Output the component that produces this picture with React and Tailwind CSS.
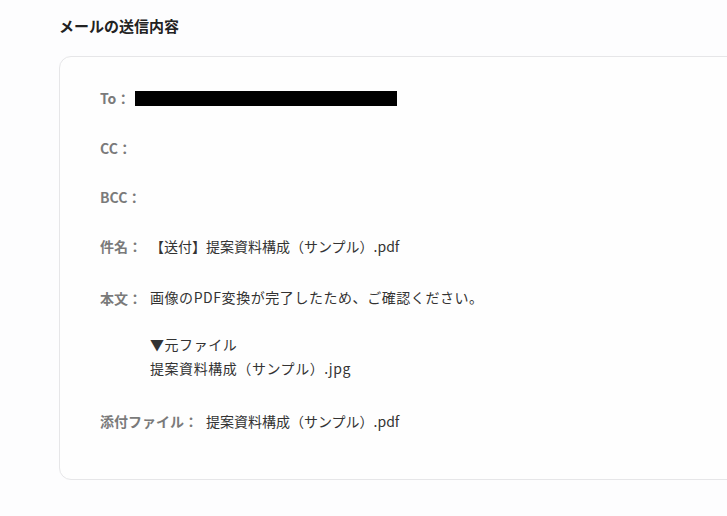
import React from "react";

const font = { fontFamily: '"Noto Sans CJK JP", "Noto Sans", sans-serif' };

const Row = ({ label, children, className = "" }) => (
  <div className={`flex items-start ${className}`}>
    <span className="text-[14px] leading-[24px] font-semibold text-[#7a7a7a] whitespace-nowrap">
      {label}
    </span>
    <div className="ml-[8px] text-[14px] leading-[24px] text-[#333333]">{children}</div>
  </div>
);

const App = () => {
  return (
    <div
      className="w-full h-[516px] overflow-hidden bg-[#fdfdfe] pl-[59px] pt-[15px]"
      style={font}
    >
      <h2 className="text-[15px] leading-[22px] font-bold text-[#222222]">
        メールの送信内容
      </h2>

      <div className="mt-[19px] w-[720px] h-[424px] rounded-[12px] border border-[#e6e6e8] bg-[#fefefe] pl-[40px] pt-[29px]">
        <div className="flex items-center">
          <span className="text-[14px] leading-[24px] font-semibold text-[#7a7a7a]">
            To：
          </span>
          <span className="ml-[5px] block w-[262px] h-[15px] bg-black" />
        </div>

        <Row label="CC：" className="mt-[26px]" />
        <Row label="BCC：" className="mt-[25px]" />
        <Row label="件名：" className="mt-[25px]">
          【送付】提案資料構成（サンプル）.pdf
        </Row>
        <Row label="本文：" className="mt-[28px]">
          <div className="leading-[23.5px] tracking-[0.04em] whitespace-pre-line">
            {"画像のPDF変換が完了したため、ご確認ください。\n\n▼元ファイル\n提案資料構成（サンプル）.jpg"}
          </div>
        </Row>
        <Row label="添付ファイル：" className="mt-[29px]">
          提案資料構成（サンプル）.pdf
        </Row>
      </div>
    </div>
  );
};

export default App;
